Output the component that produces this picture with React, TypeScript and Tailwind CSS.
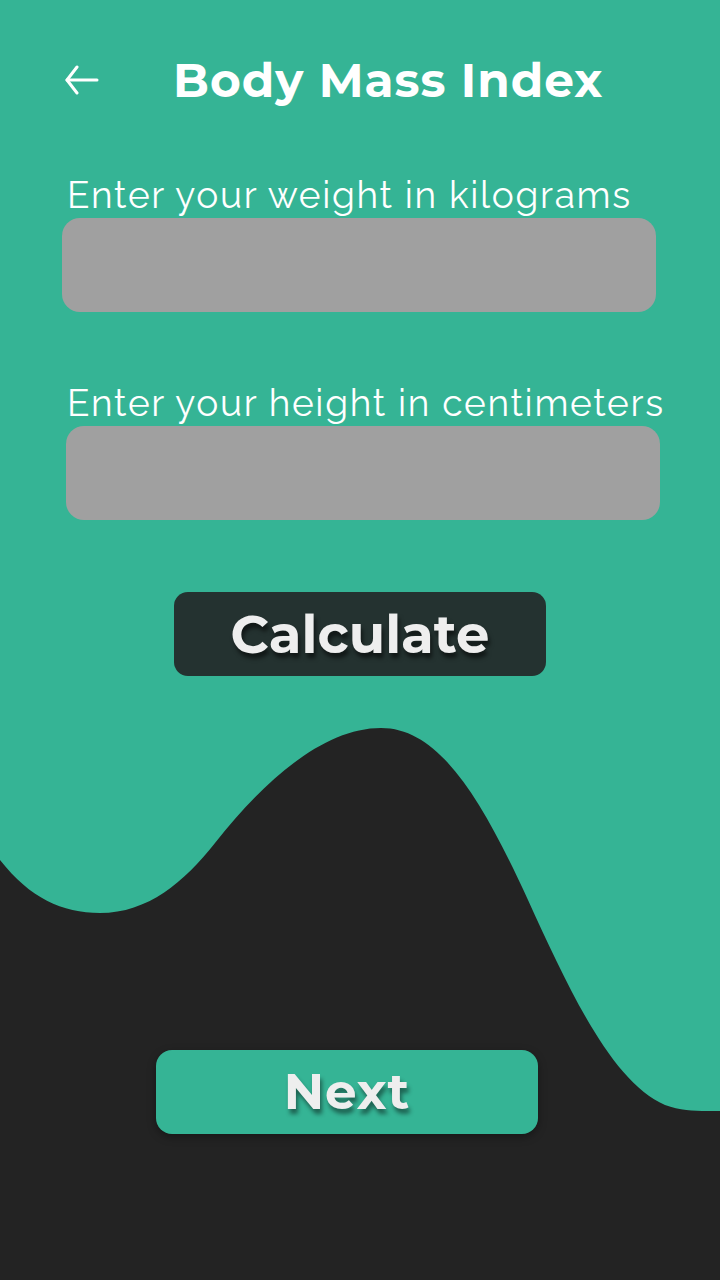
import React from 'react';

const heading = { fontFamily: 'Montserrat, "Open Sans", "Liberation Sans", sans-serif' };
const body = { fontFamily: 'Raleway, Lato, "Open Sans", sans-serif' };

function BackArrow() {
  return (
    <svg width="36" height="30" viewBox="0 0 36 30" fill="none" stroke="white" strokeWidth="3" strokeLinecap="round" strokeLinejoin="round">
      <path d="M33 15H3" />
      <path d="M13 2L3 15l10 13" />
    </svg>
  );
}

function Wave() {
  return (
    <svg className="absolute inset-0" width="720" height="1280" viewBox="0 0 720 1280">
      <path
        d="M0 860C30 898 62 913 100 913C148 913 184 882 215 843C268 776 326 728 381 728C440 728 482 800 528 900C570 992 612 1082 665 1105C684 1112 700 1111 720 1111L720 1280L0 1280Z"
        fill="#232323"
      />
    </svg>
  );
}

function Field({ label, className, labelClass }: { label: string; className: string; labelClass: string }) {
  return (
    <div className={className}>
      <label className={`block text-white text-[37px] leading-none tracking-[1.7px] ${labelClass}`} style={body}>
        {label}
      </label>
      <div className="mt-[4px] h-[94px] w-[594px] rounded-[18px] bg-[#a0a0a0]" />
    </div>
  );
}

export default function App() {
  return (
    <div className="relative w-[720px] h-[1280px] overflow-hidden bg-[#35b495]">
      <Wave />
      <div className="relative flex flex-col">
        <div className="flex items-center h-[56px] mt-[52px] pl-[64px]">
          <BackArrow />
          <h1 className="ml-[73px] text-white font-bold text-[47px] leading-none tracking-[1px]" style={heading}>
            Body Mass Index
          </h1>
        </div>

        <Field label="Enter your weight in kilograms" className="mt-[69px] ml-[62px]" labelClass="pl-[5px]" />
        <Field label="Enter your height in centimeters" className="mt-[73px] ml-[66px]" labelClass="pl-[1px]" />

        <button
          className="mt-[72px] ml-[174px] w-[372px] h-[84px] rounded-[14px] bg-[#243230] text-[#eeeeee] font-bold text-[53px] leading-none [text-shadow:2px_5px_4px_rgba(0,0,0,0.55)]"
          style={heading}
        >
          Calculate
        </button>

        <button
          className="mt-[374px] ml-[156px] w-[382px] h-[84px] rounded-[16px] bg-[#35b495] text-[#eeeeee] font-bold text-[50px] leading-none tracking-[1px] shadow-[0_3px_8px_rgba(0,0,0,0.35)] [text-shadow:2px_5px_4px_rgba(0,0,0,0.45)]"
          style={heading}
        >
          Next
        </button>
      </div>
    </div>
  );
}
